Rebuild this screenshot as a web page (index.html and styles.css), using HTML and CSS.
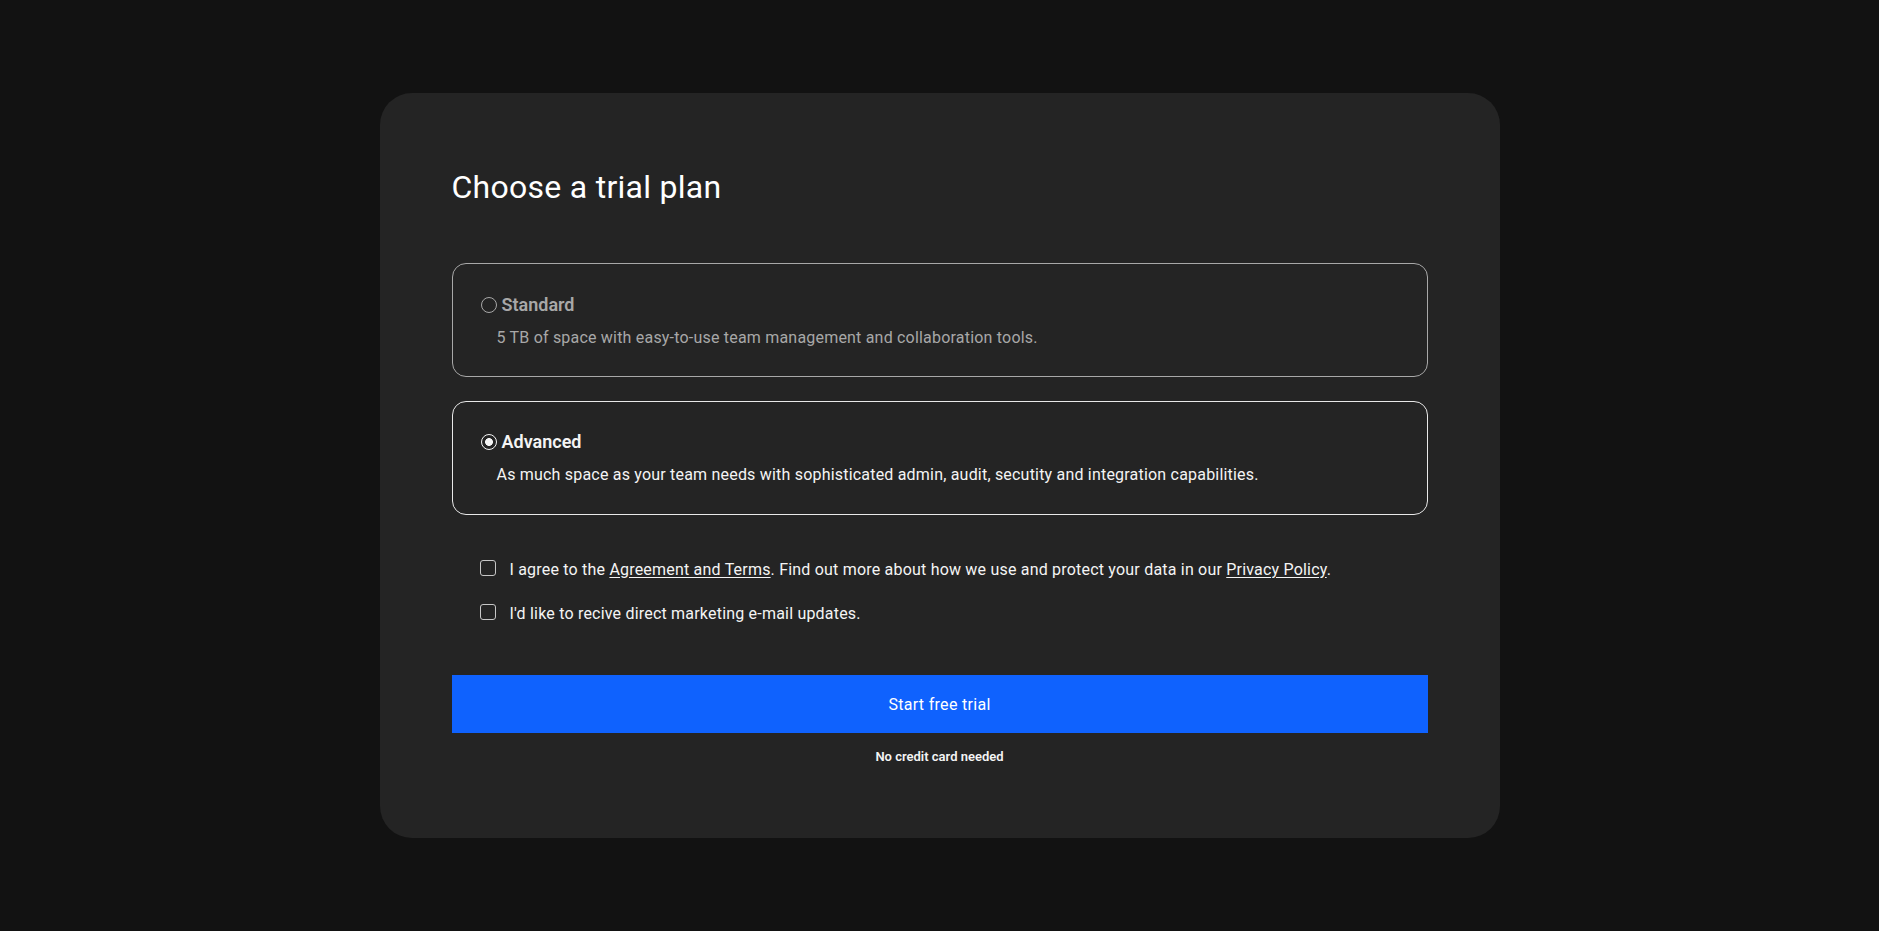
FILE: index.html
```html
<!DOCTYPE html>
<html lang="en">
<head>
<meta charset="utf-8">
<title>Choose a trial plan</title>
<link rel="stylesheet" href="styles.css">
</head>
<body>
<main class="page">
  <section class="card">
    <h1 class="title">Choose a trial plan</h1>
    <div class="plans">
      <label class="plan">
        <span class="plan-head">
          <input class="radio" type="radio" name="plan" value="standard">
          <span class="plan-name">Standard</span>
        </span>
        <span class="plan-desc">5 TB of space with easy-to-use team management and collaboration tools.</span>
      </label>
      <label class="plan plan-active">
        <span class="plan-head">
          <input class="radio" type="radio" name="plan" value="advanced" checked>
          <span class="plan-name">Advanced</span>
        </span>
        <span class="plan-desc">As much space as your team needs with sophisticated admin, audit, secutity and integration capabilities.</span>
      </label>
    </div>
    <div class="consents">
      <label class="consent">
        <input class="check" type="checkbox">
        <span class="consent-text">I agree to the <a class="link" href="#">Agreement and Terms</a>. Find out more about how we use and protect your data in our <a class="link" href="#">Privacy Policy</a>.</span>
      </label>
      <label class="consent">
        <input class="check" type="checkbox">
        <span class="consent-text">I'd like to recive direct marketing e-mail updates.</span>
      </label>
    </div>
    <button class="cta" type="button">Start free trial</button>
    <p class="note">No credit card needed</p>
  </section>
</main>
</body>
</html>
```
FILE: styles.css
```css
* { box-sizing: border-box; }

html, body {
  margin: 0;
  padding: 0;
  background: #121212;
}

body {
  font-family: Roboto, "Liberation Sans", sans-serif;
  color: #f4f4f4;
}

.page {
  min-height: 931px;
  display: flex;
  align-items: center;
  justify-content: center;
}

.card {
  width: 1120px;
  background: #242424;
  border-radius: 32px;
  padding: 74px 72px 73px;
  display: flex;
  flex-direction: column;
}

.title {
  margin: 0;
  font-size: 32px;
  line-height: 40px;
  font-weight: 400;
  letter-spacing: 0.27px;
  color: #ffffff;
}

.plans {
  margin-top: 56px;
  display: flex;
  flex-direction: column;
  gap: 24px;
}

.plan {
  display: flex;
  flex-direction: column;
  gap: 9px;
  border: 1px solid #a8a8a8;
  border-radius: 14px;
  padding: 29px 28px 26px;
  color: #a8a8a8;
  cursor: pointer;
}

.plan-active {
  border-color: #e8e8e8;
  color: #f4f4f4;
  padding: 28px 28px 27px;
}

.plan-head {
  display: flex;
  align-items: center;
  gap: 5px;
}

.radio {
  appearance: none;
  -webkit-appearance: none;
  margin: 0;
  width: 16px;
  height: 16px;
  border: 1px solid #a8a8a8;
  border-radius: 50%;
  flex: none;
}

.radio:checked {
  border: 1.5px solid #f4f4f4;
  background: radial-gradient(circle, #f4f4f4 0 3.6px, transparent 4.2px);
}

.plan-name {
  font-size: 18px;
  line-height: 24px;
  font-weight: 600;
}

.plan-desc {
  padding-left: 16px;
  font-size: 16px;
  line-height: 24px;
  letter-spacing: 0.2px;
}

.consents {
  margin-top: 43px;
  display: flex;
  flex-direction: column;
  gap: 20px;
  padding-left: 28px;
}

.consent {
  display: flex;
  align-items: center;
  gap: 14px;
  cursor: pointer;
}

.check {
  appearance: none;
  -webkit-appearance: none;
  margin: 0;
  width: 16px;
  height: 16px;
  border: 1px solid #c6c6c6;
  border-radius: 3px;
  flex: none;
  position: relative;
  top: -2px;
}

.consent-text {
  font-size: 16px;
  line-height: 24px;
  letter-spacing: 0.2px;
  color: #f4f4f4;
}

.link {
  color: #f4f4f4;
  text-decoration: underline;
  text-underline-offset: 2px;
}

.cta {
  margin-top: 49px;
  height: 58px;
  width: 100%;
  border: 0;
  background: #0f62fe;
  color: #ffffff;
  font-family: inherit;
  font-size: 16px;
  letter-spacing: 0.3px;
  cursor: pointer;
}

.note {
  margin: 16px 0 0;
  text-align: center;
  font-size: 13px;
  line-height: 16px;
  font-weight: 600;
  color: #f4f4f4;
}
```
